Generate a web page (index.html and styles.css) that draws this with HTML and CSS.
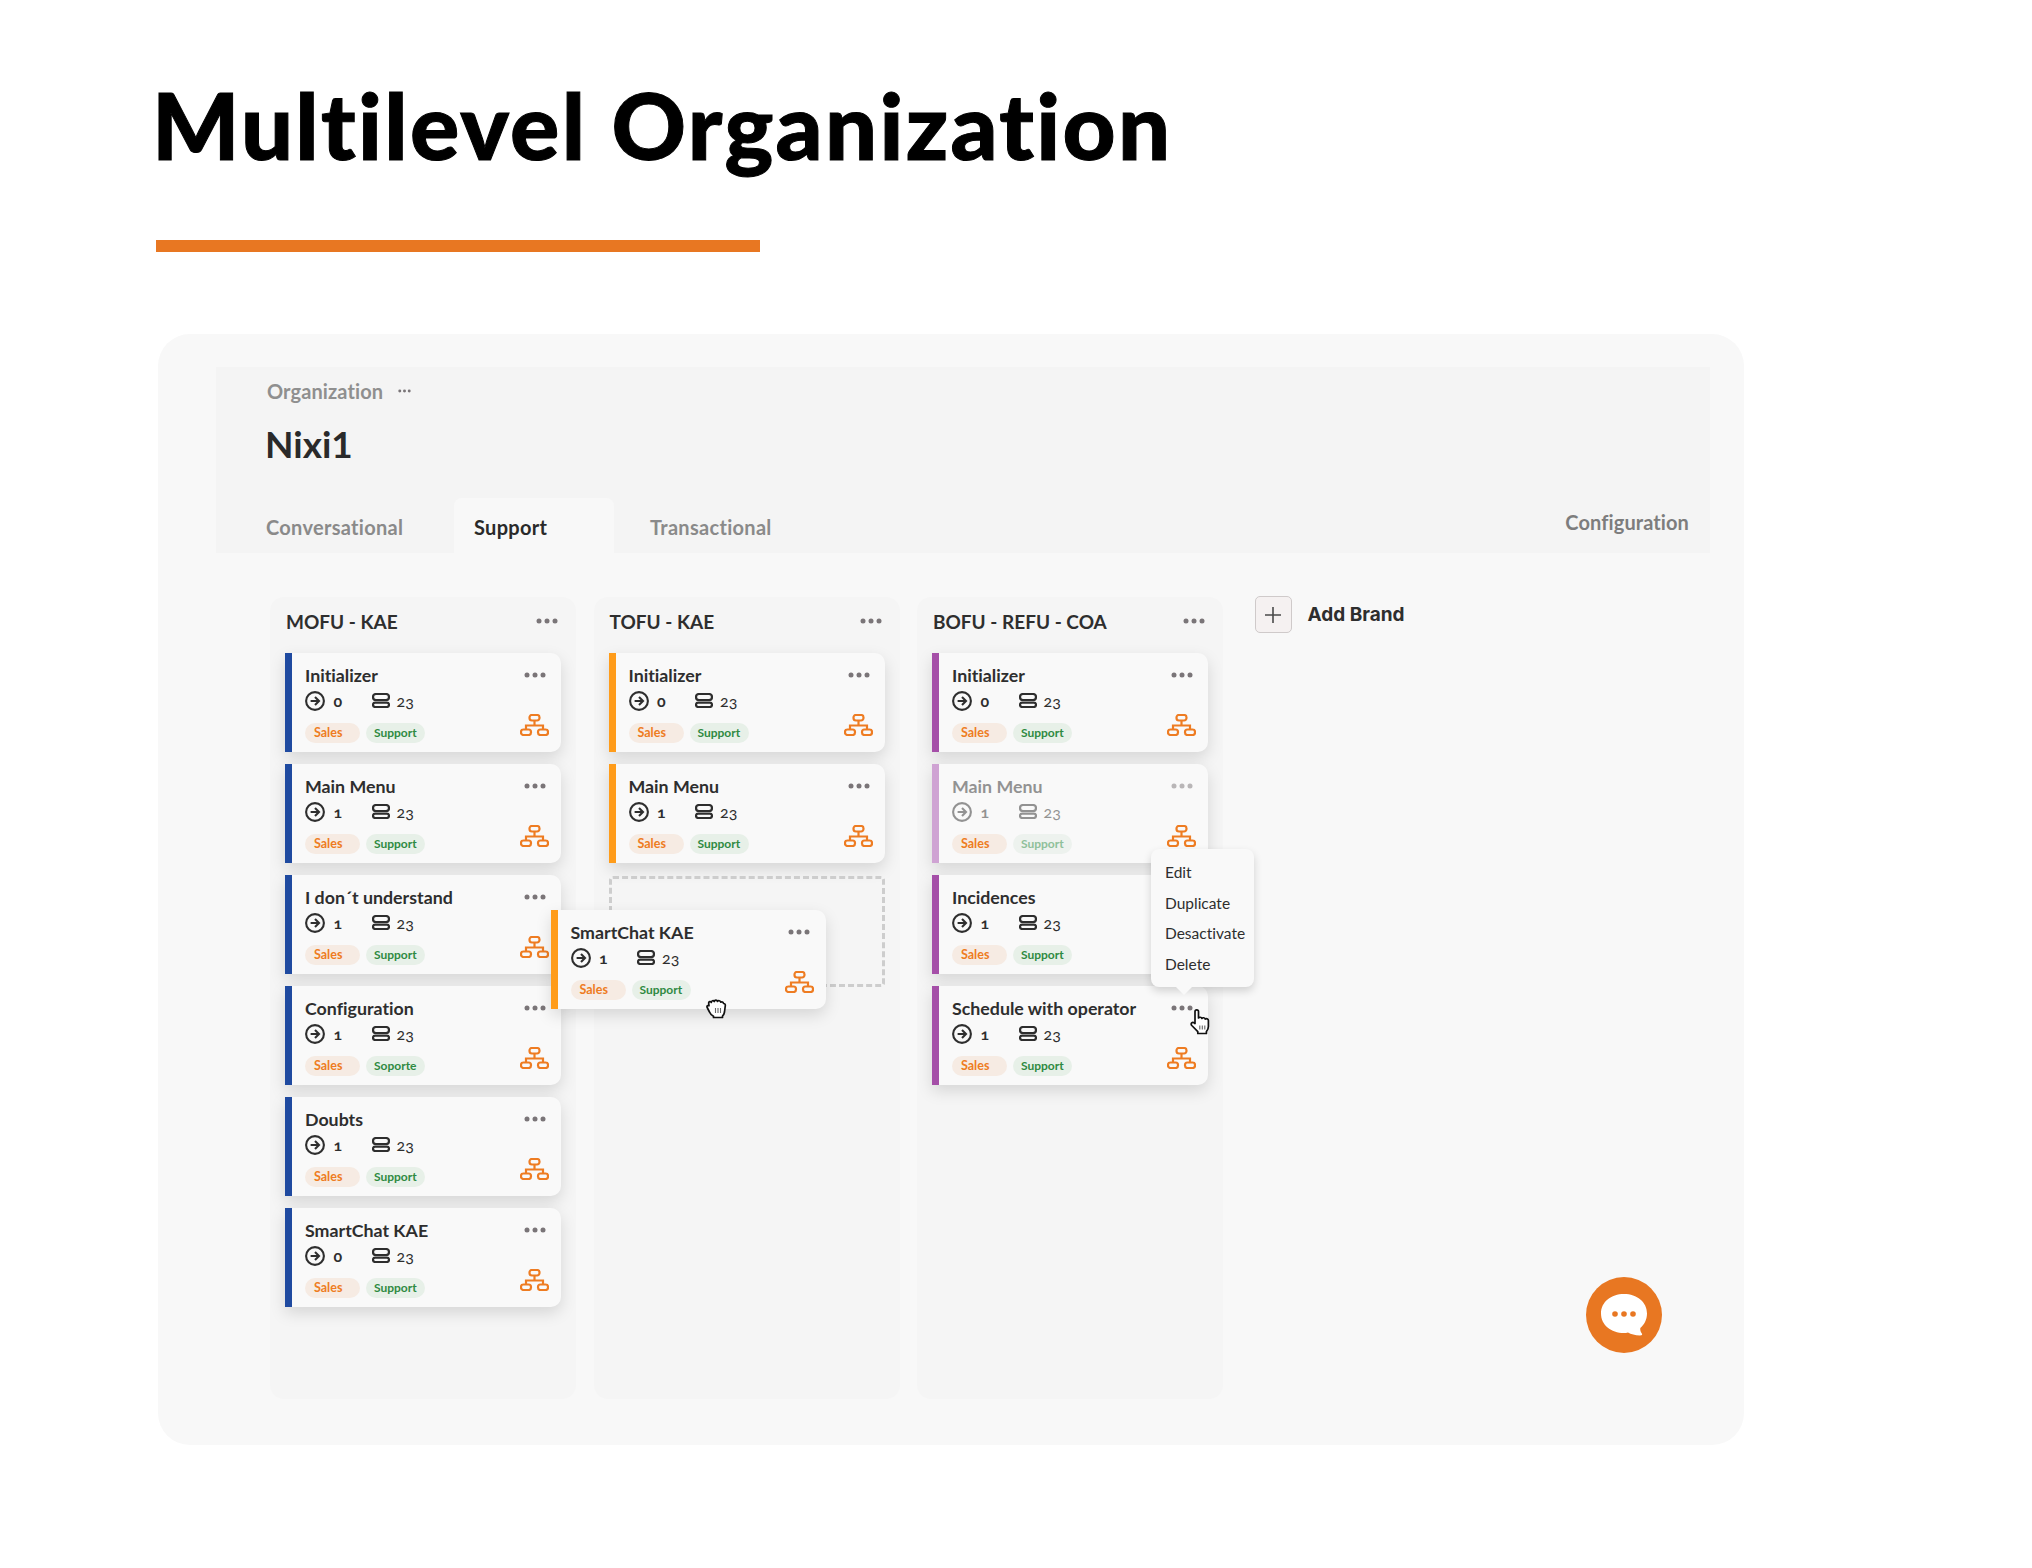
FILE: index.html
```html
<!DOCTYPE html>
<html lang="en">
<head>
<meta charset="utf-8">
<title>Multilevel Organization</title>
<link rel="stylesheet" href="styles.css">
</head>
<body>
<svg class="defs" width="0" height="0" aria-hidden="true">
  <symbol id="dots" viewBox="0 0 22 6"><circle cx="3" cy="3" r="2.5"/><circle cx="11" cy="3" r="2.5"/><circle cx="19" cy="3" r="2.5"/></symbol>
  <symbol id="arrow" viewBox="0 0 20 20"><circle cx="10" cy="10" r="8.9" fill="none" stroke="currentColor" stroke-width="2.1"/><path d="M5.6 10h8M10 6l4 4-4 4" fill="none" stroke="currentColor" stroke-width="2.1"/></symbol>
  <symbol id="stack" viewBox="0 0 18 15"><rect x="1" y="1" width="16" height="6" rx="3" fill="none" stroke="currentColor" stroke-width="2.2"/><rect x="1" y="9.600" width="16" height="4.400" rx="2.200" fill="none" stroke="currentColor" stroke-width="2.2"/></symbol>
  <symbol id="org" viewBox="0 0 29 22"><g fill="none" stroke="currentColor" stroke-width="2.200"><rect x="9.500" y="1" width="10" height="5.500" rx="2.400"/><rect x="1" y="15.500" width="10" height="5.500" rx="2.400"/><rect x="18" y="15.500" width="10" height="5.500" rx="2.400"/><path d="M14.500 6.500v5M6 15.500v-4h17v4"/></g></symbol>
  <symbol id="grab" viewBox="0 0 22 22"><path d="M4.500 15 2.200 10.500C1.400 9 3 8 4 8.800L3.700 6.200C3.500 4.600 5.600 4 6.300 5.400 6.300 3.600 8.500 3 9.300 4.500 9.700 2.800 12 2.800 12.500 4.400 13.300 3.200 15.500 3.600 15.700 5.200 16.700 4.500 18.300 5 18.500 6.500 19.600 6.400 20.500 7.300 20.300 8.600L19.500 15C19.200 17 18.500 18 17.500 19V20.500H8.500V19.200C6.800 18.400 5.300 17 4.500 15z" fill="#fff" stroke="#111" stroke-width="1.700" stroke-linejoin="round"/><path d="M10.500 11v5M13 11v5M15.500 11v5" stroke="#666" stroke-width="1.100"/></symbol>
  <symbol id="point" viewBox="0 0 24 27"><path d="M6 15.500V3.500C6 1.200 9.500 1.200 9.500 3.500V10c.7-1.100 3-1 3.400.4.800-1.100 3-.8 3.300.7 1-.8 3.200-.3 3.200 1.500v5.900c0 2.500-1 3.900-2 5.100v1.900H8.800V23.600L2.800 17.500C1.200 15.600 3.500 13.500 5 14.800z" fill="#fff" stroke="#111" stroke-width="1.700" stroke-linejoin="round"/><path d="M10.800 17.500v4M13.300 17.500v4M15.800 17.500v4" stroke="#666" stroke-width="1.100"/></symbol>
</svg>

<main class="page">
  <h1 class="title">Multilevel Organization</h1>
  <div class="rule"></div>

  <section class="panel">
    <header class="org-head">
      <div class="crumb"><span>Organization</span><svg class="crumb-dots"><use href="#dots"/></svg></div>
      <h2 class="org-name">Nixi1</h2>
      <nav class="tabs">
        <a class="tab tab-first">Conversational</a>
        <a class="tab tab-active">Support</a>
        <a class="tab tab-third">Transactional</a>
        <a class="config">Configuration</a>
      </nav>
    </header>

    <div class="board">
      <section class="col col-blue">
        <header class="col-head"><span>MOFU - KAE</span><svg class="dots"><use href="#dots"/></svg></header>
        <article class="card"><div class="card-head"><span>Initializer</span><svg class="dots"><use href="#dots"/></svg></div><div class="stats"><svg class="ic-arrow"><use href="#arrow"/></svg><span class="num">0</span><svg class="ic-stack"><use href="#stack"/></svg><span class="count">23</span></div><div class="card-foot"><span class="tag sales">Sales</span><span class="tag support">Support</span><svg class="ic-org"><use href="#org"/></svg></div></article>
        <article class="card"><div class="card-head"><span>Main Menu</span><svg class="dots"><use href="#dots"/></svg></div><div class="stats"><svg class="ic-arrow"><use href="#arrow"/></svg><span class="num">1</span><svg class="ic-stack"><use href="#stack"/></svg><span class="count">23</span></div><div class="card-foot"><span class="tag sales">Sales</span><span class="tag support">Support</span><svg class="ic-org"><use href="#org"/></svg></div></article>
        <article class="card"><div class="card-head"><span>I don´t understand</span><svg class="dots"><use href="#dots"/></svg></div><div class="stats"><svg class="ic-arrow"><use href="#arrow"/></svg><span class="num">1</span><svg class="ic-stack"><use href="#stack"/></svg><span class="count">23</span></div><div class="card-foot"><span class="tag sales">Sales</span><span class="tag support">Support</span><svg class="ic-org"><use href="#org"/></svg></div></article>
        <article class="card"><div class="card-head"><span>Configuration</span><svg class="dots"><use href="#dots"/></svg></div><div class="stats"><svg class="ic-arrow"><use href="#arrow"/></svg><span class="num">1</span><svg class="ic-stack"><use href="#stack"/></svg><span class="count">23</span></div><div class="card-foot"><span class="tag sales">Sales</span><span class="tag support">Soporte</span><svg class="ic-org"><use href="#org"/></svg></div></article>
        <article class="card"><div class="card-head"><span>Doubts</span><svg class="dots"><use href="#dots"/></svg></div><div class="stats"><svg class="ic-arrow"><use href="#arrow"/></svg><span class="num">1</span><svg class="ic-stack"><use href="#stack"/></svg><span class="count">23</span></div><div class="card-foot"><span class="tag sales">Sales</span><span class="tag support">Support</span><svg class="ic-org"><use href="#org"/></svg></div></article>
        <article class="card"><div class="card-head"><span>SmartChat KAE</span><svg class="dots"><use href="#dots"/></svg></div><div class="stats"><svg class="ic-arrow"><use href="#arrow"/></svg><span class="num">0</span><svg class="ic-stack"><use href="#stack"/></svg><span class="count">23</span></div><div class="card-foot"><span class="tag sales">Sales</span><span class="tag support">Support</span><svg class="ic-org"><use href="#org"/></svg></div></article>
      </section>

      <section class="col col-orange">
        <header class="col-head"><span>TOFU - KAE</span><svg class="dots"><use href="#dots"/></svg></header>
        <article class="card"><div class="card-head"><span>Initializer</span><svg class="dots"><use href="#dots"/></svg></div><div class="stats"><svg class="ic-arrow"><use href="#arrow"/></svg><span class="num">0</span><svg class="ic-stack"><use href="#stack"/></svg><span class="count">23</span></div><div class="card-foot"><span class="tag sales">Sales</span><span class="tag support">Support</span><svg class="ic-org"><use href="#org"/></svg></div></article>
        <article class="card"><div class="card-head"><span>Main Menu</span><svg class="dots"><use href="#dots"/></svg></div><div class="stats"><svg class="ic-arrow"><use href="#arrow"/></svg><span class="num">1</span><svg class="ic-stack"><use href="#stack"/></svg><span class="count">23</span></div><div class="card-foot"><span class="tag sales">Sales</span><span class="tag support">Support</span><svg class="ic-org"><use href="#org"/></svg></div></article>
        <div class="drop-slot"></div>
        <article class="card card-drag"><div class="card-head"><span>SmartChat KAE</span><svg class="dots"><use href="#dots"/></svg></div><div class="stats"><svg class="ic-arrow"><use href="#arrow"/></svg><span class="num">1</span><svg class="ic-stack"><use href="#stack"/></svg><span class="count">23</span></div><div class="card-foot"><span class="tag sales">Sales</span><span class="tag support">Support</span><svg class="ic-org"><use href="#org"/></svg></div></article>
        <svg class="cursor-grab"><use href="#grab"/></svg>
      </section>

      <section class="col col-purple">
        <header class="col-head"><span>BOFU - REFU - COA</span><svg class="dots"><use href="#dots"/></svg></header>
        <article class="card"><div class="card-head"><span>Initializer</span><svg class="dots"><use href="#dots"/></svg></div><div class="stats"><svg class="ic-arrow"><use href="#arrow"/></svg><span class="num">0</span><svg class="ic-stack"><use href="#stack"/></svg><span class="count">23</span></div><div class="card-foot"><span class="tag sales">Sales</span><span class="tag support">Support</span><svg class="ic-org"><use href="#org"/></svg></div></article>
        <article class="card card-off"><div class="card-head"><span>Main Menu</span><svg class="dots"><use href="#dots"/></svg></div><div class="stats"><svg class="ic-arrow"><use href="#arrow"/></svg><span class="num">1</span><svg class="ic-stack"><use href="#stack"/></svg><span class="count">23</span></div><div class="card-foot"><span class="tag sales">Sales</span><span class="tag support">Support</span><svg class="ic-org"><use href="#org"/></svg></div></article>
        <article class="card"><div class="card-head"><span>Incidences</span><svg class="dots"><use href="#dots"/></svg></div><div class="stats"><svg class="ic-arrow"><use href="#arrow"/></svg><span class="num">1</span><svg class="ic-stack"><use href="#stack"/></svg><span class="count">23</span></div><div class="card-foot"><span class="tag sales">Sales</span><span class="tag support">Support</span><svg class="ic-org"><use href="#org"/></svg></div></article>
        <article class="card"><div class="card-head"><span>Schedule with operator</span><svg class="dots"><use href="#dots"/></svg></div><div class="stats"><svg class="ic-arrow"><use href="#arrow"/></svg><span class="num">1</span><svg class="ic-stack"><use href="#stack"/></svg><span class="count">23</span></div><div class="card-foot"><span class="tag sales">Sales</span><span class="tag support">Support</span><svg class="ic-org"><use href="#org"/></svg></div></article>
        <ul class="menu"><li>Edit</li><li>Duplicate</li><li>Desactivate</li><li>Delete</li></ul>
        <svg class="cursor-point"><use href="#point"/></svg>
      </section>

      <div class="add-brand"><span class="add-box"><svg viewBox="0 0 18 18" width="18" height="18"><path d="M9 1v16M1 9h16" stroke="#4a4a4a" stroke-width="1.600"/></svg></span><span>Add Brand</span></div>
    </div>

    <button class="chat" aria-label="Chat">
      <svg viewBox="0 0 48 44" width="48" height="44"><path d="M24 1C11 1 1 9 1 20.500S11 40 24 40c1.500 0 2.500 0 4-.5 3 1.800 7 2.800 12 3 2 0 2.700-1 1.700-2.300-1-1.200-1.700-3-1.400-5.200C44 32 47 26.500 47 20.500 47 9 37 1 24 1z" fill="#fff"/><circle cx="15" cy="21" r="2.800" fill="#e87722"/><circle cx="24" cy="21" r="2.800" fill="#e87722"/><circle cx="33" cy="21" r="2.800" fill="#e87722"/></svg>
    </button>
  </section>
</main>
</body>
</html>
```
FILE: styles.css
```css
* { box-sizing: border-box; }
html, body { margin: 0; padding: 0; background: #fff; }
body { font-family: "Lato", "Open Sans", sans-serif; color: #2e2e2e; font-variant-ligatures: none; }
.defs { position: absolute; }
.page { width: 2032px; height: 1568px; padding: 75px 0 0 155px; }
.title { margin: 0 0 0 -3px; font-size: 92px; line-height: 100px; font-weight: 900; color: #000; letter-spacing: 2.300px; -webkit-text-stroke: 1px #000; white-space: nowrap; }
.rule { width: 604px; height: 12px; margin: 65px 0 0 1px; background: #e87722; }

.panel { position: relative; width: 1586px; height: 1111px; margin: 82px 0 0 3px; padding: 33px 0 0 58px; background: #f8f8f8; border-radius: 32px; }
.org-head { width: 1494px; height: 186px; padding-top: 12px; background: #f4f4f4; }
.crumb { display: flex; align-items: center; gap: 15px; padding-left: 51px; height: 23px; font-size: 20px; font-weight: 700; color: #8f8f8f; letter-spacing: .1px; }
.crumb-dots { width: 13px; height: 4px; fill: #7a7578; }
.org-name { margin: 19px 0 0 49px; font-size: 37px; line-height: 46px; font-weight: 700; color: #2a2a2a; }
.tabs { display: flex; align-items: flex-end; height: 55px; margin-top: 31px; font-size: 20px; font-weight: 700; color: #8a8a8a; letter-spacing: .3px; }
.tab { display: block; height: 55px; line-height: 58px; }
.tab-first { width: 238px; padding-left: 50px; }
.tab-active { width: 160px; padding-left: 20px; background: #f8f8f8; color: #2a2a2a; border-radius: 8px 8px 0 0; }
.tab-third { padding-left: 36px; }
.config { margin-left: auto; margin-right: 21px; height: 55px; line-height: 48px; color: #7d7d7d; letter-spacing: .1px; }

.board { display: flex; gap: 17.5px; align-items: flex-start; margin: 44px 0 0 54px; }
.col { position: relative; display: flex; flex-direction: column; gap: 12px; flex: none; width: 306px; height: 802px; padding: 0 15px; background: #f5f5f5; border-radius: 14px; }
.col-head { display: flex; align-items: center; justify-content: space-between; height: 44px; padding: 4px 3px 0 1px; font-size: 19px; font-weight: 700; color: #2e2e2e; }
.dots { flex: none; width: 22px; height: 6px; fill: #7a7578; }

.card { flex: none; width: 276px; height: 99px; padding: 12px 12px 8px 13px; background: #f9f9f9; border-left: 7px solid #1f4aa0; border-radius: 0 10px 10px 0; box-shadow: 0 6px 16px rgba(0,0,0,.13); display: flex; flex-direction: column; }
.col-orange .card { border-left-color: #ff9c1a; }
.col-purple .card { border-left-color: #a54fa8; }
.card-head { display: flex; align-items: center; justify-content: space-between; height: 20px; padding-right: 3px; font-size: 17.800px; font-weight: 700; color: #2e2e2e; white-space: nowrap; }
.stats { display: flex; align-items: center; height: 20px; margin-top: 5.500px; font-size: 16px; font-weight: 700; color: #2e2e2e; font-variant-numeric: oldstyle-nums; }
.ic-arrow { width: 20px; height: 20px; flex: none; }
.num { width: 38px; margin-left: 8.500px; }
.ic-stack { width: 18px; height: 15px; flex: none; }
.count { margin-left: 7px; font-weight: 400; }
.card-foot { display: flex; align-items: flex-end; gap: 6px; height: 27px; margin-top: 5.800px; }
.tag { display: block; height: 20px; padding: 0 9px; line-height: 20px; font-size: 12.500px; font-weight: 700; border-radius: 10px; }
.sales { width: 55px; background: #f6ebe3; color: #ee7c22; }
.support { width: 59px; padding: 0 8px; background: #e7f0e8; color: #2f8a42; font-size: 12px; white-space: nowrap; }
.ic-org { width: 29px; height: 22px; flex: none; margin: 0 0 7.300px auto; color: #ee7c22; }

.card-off { border-left-color: #cfa3d3 !important; }
.card-off .card-head, .card-off .stats { opacity: .5; }
.card-off .support { color: #8fc09a; background: #edf2ee; }

.drop-slot { flex: none; width: 276px; height: 111px; margin-top: 1px; border: 3px dashed #cdcdcd; border-radius: 4px; }
.card-drag { position: absolute; left: -43px; top: 313px; z-index: 3; width: 275px; }
.card-drag .card-head { padding-right: 4px; }
.cursor-grab { position: absolute; left: 111px; top: 400px; width: 22px; height: 22px; z-index: 4; }

.menu { position: absolute; left: 234px; top: 252px; z-index: 3; width: 103px; height: 138px; margin: 0; padding: 8px 0 0 14px; list-style: none; background: #f9f9f9; border-radius: 8px; box-shadow: 0 4px 8px rgba(0,0,0,.16); font-size: 15.500px; line-height: 30.700px; color: #2e2e2e; }
.menu::after { content: ""; position: absolute; left: 25px; bottom: -8px; width: 16px; height: 8px; background: #f9f9f9; clip-path: polygon(0 0, 100% 0, 50% 100%); }
.cursor-point { position: absolute; left: 272px; top: 411px; width: 24px; height: 27px; z-index: 4; }

.add-brand { display: flex; align-items: center; gap: 16px; margin: -1px 0 0 14px; font-family: "Inter", sans-serif; font-size: 19px; font-weight: 700; color: #2e2e2e; }
.add-box { display: flex; align-items: center; justify-content: center; width: 37px; height: 37px; background: #f5f1f1; border: 1px solid #cfcaca; border-radius: 5px; }

.chat { position: absolute; left: 1428px; top: 943px; display: flex; align-items: center; justify-content: center; width: 76px; height: 76px; padding: 0; border: 0; border-radius: 50%; background: #e87722; }
```
